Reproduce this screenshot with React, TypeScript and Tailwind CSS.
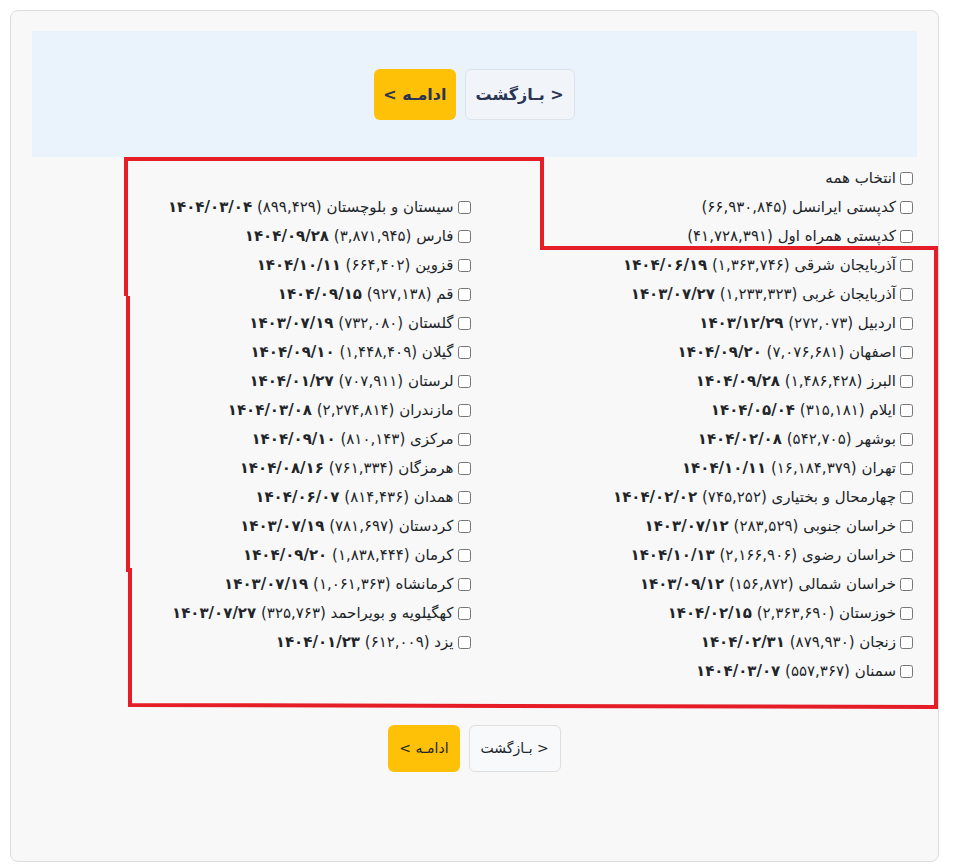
import React from "react";

type Region = {
  name: string;
  count?: string;
  date?: string;
};

const rightColumn: Region[] = [
  { name: "انتخاب همه" },
  { name: "کدپستی ایرانسل", count: "۶۶,۹۳۰,۸۴۵" },
  { name: "کدپستی همراه اول", count: "۴۱,۷۲۸,۳۹۱" },
  { name: "آذربایجان شرقی", count: "۱,۳۶۳,۷۴۶", date: "۱۴۰۴/۰۶/۱۹" },
  { name: "آذربایجان غربی", count: "۱,۲۳۳,۳۲۳", date: "۱۴۰۳/۰۷/۲۷" },
  { name: "اردبیل", count: "۲۷۲,۰۷۳", date: "۱۴۰۳/۱۲/۲۹" },
  { name: "اصفهان", count: "۷,۰۷۶,۶۸۱", date: "۱۴۰۴/۰۹/۲۰" },
  { name: "البرز", count: "۱,۴۸۶,۴۲۸", date: "۱۴۰۴/۰۹/۲۸" },
  { name: "ایلام", count: "۳۱۵,۱۸۱", date: "۱۴۰۴/۰۵/۰۴" },
  { name: "بوشهر", count: "۵۴۲,۷۰۵", date: "۱۴۰۴/۰۲/۰۸" },
  { name: "تهران", count: "۱۶,۱۸۴,۳۷۹", date: "۱۴۰۴/۱۰/۱۱" },
  { name: "چهارمحال و بختیاری", count: "۷۴۵,۲۵۲", date: "۱۴۰۴/۰۲/۰۲" },
  { name: "خراسان جنوبی", count: "۲۸۳,۵۲۹", date: "۱۴۰۳/۰۷/۱۲" },
  { name: "خراسان رضوی", count: "۲,۱۶۶,۹۰۶", date: "۱۴۰۴/۱۰/۱۳" },
  { name: "خراسان شمالی", count: "۱۵۶,۸۷۲", date: "۱۴۰۳/۰۹/۱۲" },
  { name: "خوزستان", count: "۲,۳۶۳,۶۹۰", date: "۱۴۰۴/۰۲/۱۵" },
  { name: "زنجان", count: "۸۷۹,۹۳۰", date: "۱۴۰۴/۰۲/۳۱" },
  { name: "سمنان", count: "۵۵۷,۳۶۷", date: "۱۴۰۴/۰۳/۰۷" },
];

const leftColumn: Region[] = [
  { name: "سیستان و بلوچستان", count: "۸۹۹,۴۲۹", date: "۱۴۰۴/۰۳/۰۴" },
  { name: "فارس", count: "۳,۸۷۱,۹۴۵", date: "۱۴۰۴/۰۹/۲۸" },
  { name: "قزوین", count: "۶۶۴,۴۰۲", date: "۱۴۰۴/۱۰/۱۱" },
  { name: "قم", count: "۹۲۷,۱۳۸", date: "۱۴۰۴/۰۹/۱۵" },
  { name: "گلستان", count: "۷۳۲,۰۸۰", date: "۱۴۰۳/۰۷/۱۹" },
  { name: "گیلان", count: "۱,۴۴۸,۴۰۹", date: "۱۴۰۴/۰۹/۱۰" },
  { name: "لرستان", count: "۷۰۷,۹۱۱", date: "۱۴۰۴/۰۱/۲۷" },
  { name: "مازندران", count: "۲,۲۷۴,۸۱۴", date: "۱۴۰۴/۰۳/۰۸" },
  { name: "مرکزی", count: "۸۱۰,۱۴۳", date: "۱۴۰۴/۰۹/۱۰" },
  { name: "هرمزگان", count: "۷۶۱,۳۳۴", date: "۱۴۰۴/۰۸/۱۶" },
  { name: "همدان", count: "۸۱۴,۴۳۶", date: "۱۴۰۴/۰۶/۰۷" },
  { name: "کردستان", count: "۷۸۱,۶۹۷", date: "۱۴۰۳/۰۷/۱۹" },
  { name: "کرمان", count: "۱,۸۳۸,۴۴۴", date: "۱۴۰۴/۰۹/۲۰" },
  { name: "کرمانشاه", count: "۱,۰۶۱,۳۶۳", date: "۱۴۰۳/۰۷/۱۹" },
  { name: "کهگیلویه و بویراحمد", count: "۳۲۵,۷۶۳", date: "۱۴۰۳/۰۷/۲۷" },
  { name: "یزد", count: "۶۱۲,۰۰۹", date: "۱۴۰۴/۰۱/۲۳" },
];

const RegionRow = ({ region }: { region: Region }) => (
  <label className="flex h-[29px] items-center gap-[4px] whitespace-nowrap">
    <input type="checkbox" className="m-0 h-[13px] w-[13px]" />
    <span>
      {region.name}
      {region.count && <> ({region.count})</>}
      {region.date && (
        <>
          {" "}
          <b>{region.date}</b>
        </>
      )}
    </span>
  </label>
);

const NavButtons = ({ large }: { large?: boolean }) => (
  <div className="flex justify-center gap-[9px]">
    <button
      className={
        large
          ? "h-[51px] rounded-md border border-[#dde3ea] bg-[#f1f5fa] px-[10px] text-[16px] font-bold text-[#2b3453]"
          : "h-[47px] rounded-md border border-[#dedede] bg-[#f8f9fa] px-[11px] text-[14px] text-[#212529]"
      }
    >
      {"< بـازگشت"}
    </button>
    <button
      className={
        large
          ? "h-[51px] rounded-md bg-[#ffc107] px-[9px] text-[16px] font-bold text-[#2b3453]"
          : "h-[47px] rounded-md bg-[#ffc107] px-[11px] text-[14px] text-[#212529]"
      }
    >
      {"ادامـه >"}
    </button>
  </div>
);

export default function App() {
  return (
    <div className="relative h-[868px] w-[954px] bg-white p-[10px] font-['DejaVu_Sans',sans-serif]">
      <div
        dir="rtl"
        className="h-[852px] w-[929px] rounded-lg border border-[#dcdcdc] bg-[#f8f8f8] px-[21px] pt-[20px]"
      >
        <div className="bg-[#eaf3fb] pt-[38px] pb-[37px]">
          <NavButtons large />
        </div>

        <div className="grid grid-cols-2 pt-[7px] text-[15px] text-[#212529]">
          <div className="flex flex-col pr-[4px]">
            {rightColumn.map((r) => (
              <RegionRow key={r.name} region={r} />
            ))}
          </div>
          <div className="flex flex-col pr-[4px] pt-[29px]">
            {leftColumn.map((r) => (
              <RegionRow key={r.name} region={r} />
            ))}
          </div>
        </div>

        <div className="pt-[39px]">
          <NavButtons />
        </div>
      </div>

      {/* hand-drawn red frame around the province list */}
      <svg
        className="pointer-events-none absolute inset-0"
        width="954"
        height="868"
        viewBox="0 0 954 868"
      >
        <polyline
          points="126,296 126,159 542,159 542,248 936,248 936,707 130,705 130,570 128,570 128,296"
          fill="none"
          stroke="#e51d26"
          strokeWidth="4"
        />
      </svg>
    </div>
  );
}
